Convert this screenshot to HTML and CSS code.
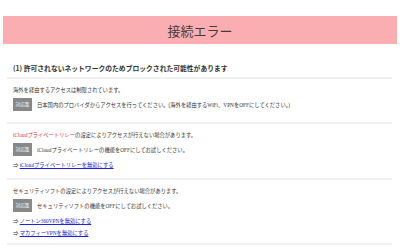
FILE: index.html
```html
<!DOCTYPE html>
<html lang="ja">
<head>
  <meta charset="UTF-8" />
  <meta name="viewport" content="width=device-width, initial-scale=1.0"/>
  <title>接続エラー</title>
  <link rel="stylesheet" href="styles.css">
</head>
<body>
  <div class="header">
    <h1>接続エラー</h1>
  </div>

  <div class="content">
    <div class="block title-block">
      <h2>(1) 許可されないネットワークのためブロックされた可能性があります</h2>
    </div>

    <div class="block">
      <p>海外を経由するアクセスは制限されています。</p>
      <div class="measure">
        <span class="badge">対応策</span>
        <span>日本国内のプロバイダからアクセスを行ってください。(海外を経由するWiFi、VPNをOFFにしてください。)</span>
      </div>
    </div>

    <div class="block icloud">
      <p><span class="red">iCloudプライベートリレー</span>の設定によりアクセスが行えない場合があります。</p>
      <div class="measure">
        <span class="badge">対応策</span>
        <span>iCloudプライベートリレーの機能をOFFにしてお試しください。</span>
      </div>
      <p class="link-row">⇒ <a href="#">iCloudプライベートリレーを無効にする</a></p>
    </div>

    <div class="block">
      <p>セキュリティソフトの設定によりアクセスが行えない場合があります。</p>
      <div class="measure">
        <span class="badge">対応策</span>
        <span>セキュリティソフトの機能をOFFにしてお試しください。</span>
      </div>
      <p class="link-row">⇒ <a href="#">ノートン360VPNを無効にする</a></p>
      <p class="link-row tight">⇒ <a href="#">マカフィーVPNを無効にする</a></p>
    </div>
  </div>
</body>
</html>
```

FILE: styles.css
```css
html, body {
  margin: 0;
  padding: 0;
  background-color: white;
  color: #333;
  font-family: "Liberation Serif", "Noto Sans CJK JP", serif;
}

.header {
  margin: 16px 3px 0;
  height: 28px;
  background-color: #fbaeb1;
  display: flex;
  align-items: center;
  justify-content: center;
}

.header h1 {
  margin: 0;
  font-family: "Noto Sans CJK JP", sans-serif;
  font-weight: normal;
  font-size: 13px;
  color: #4a3b3b;
}

.content {
  margin: 0 8px 0 7px;
}

.block {
  border-bottom: 2px solid #f1f1f1;
  padding: 7px 0 6px 6px;
  font-size: 5.3px;
  line-height: 8px;
}

.block.icloud {
  padding-bottom: 9px;
}

.title-block {
  padding-top: 19px;
  padding-bottom: 4px;
}

h2 {
  margin: 0;
  font-family: "Noto Sans CJK JP", sans-serif;
  font-size: 6.8px;
  font-weight: bold;
  line-height: 10px;
  color: #333;
}

p {
  margin: 0;
}

.measure {
  display: flex;
  align-items: center;
  gap: 5px;
  margin: 4px 0 5px;
}

.badge {
  background-color: #888;
  color: white;
  width: 19px;
  height: 13px;
  display: flex;
  align-items: center;
  justify-content: center;
  font-size: 4.6px;
}

.red {
  color: #e8323a;
}

.link-row {
  margin-top: 5px;
}

.link-row.tight {
  margin-top: 4px;
}

a {
  color: #2323d6;
}
```
